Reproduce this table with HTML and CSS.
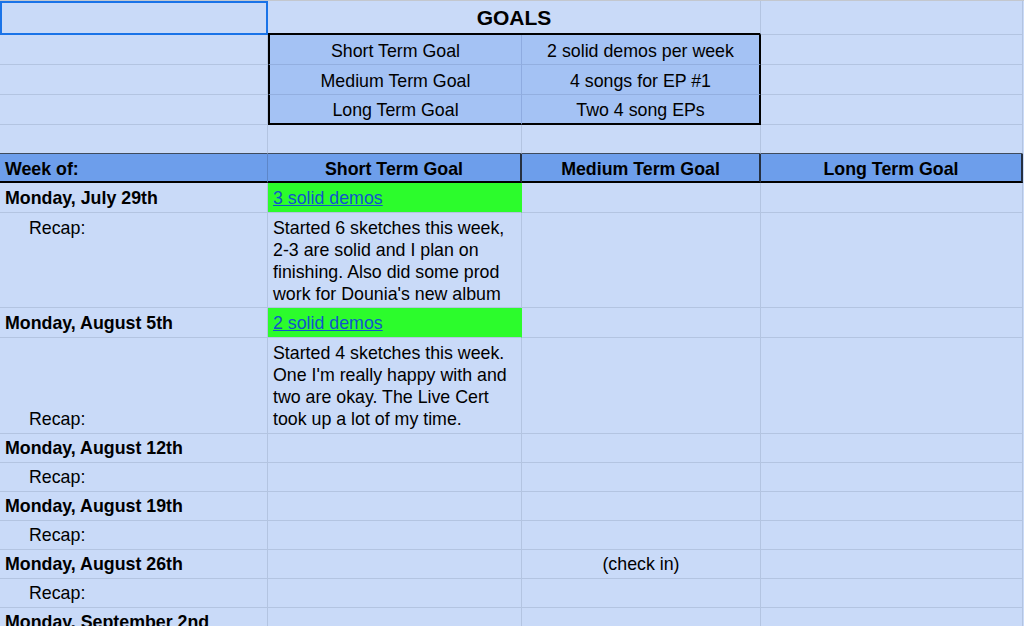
FILE: index.html
```html
<!DOCTYPE html>
<html>
<head>
<meta charset="utf-8">
<link rel="stylesheet" href="styles.css">
</head>
<body>
<div class="sheet">
  <div class="c sel"></div>
  <div class="c title span2">GOALS</div>
  <div class="c"></div>

  <div class="c"></div>
  <div class="c box bl ctr">Short Term Goal</div>
  <div class="c box br ctr">2 solid demos per week</div>
  <div class="c"></div>

  <div class="c"></div>
  <div class="c box bl ctr">Medium Term Goal</div>
  <div class="c box br ctr">4 songs for EP #1</div>
  <div class="c"></div>

  <div class="c"></div>
  <div class="c box bl bb ctr">Long Term Goal</div>
  <div class="c box br bb ctr">Two 4 song EPs</div>
  <div class="c"></div>

  <div class="c pre"></div>
  <div class="c pre"></div>
  <div class="c pre"></div>
  <div class="c pre"></div>

  <div class="c hd">Week of:</div>
  <div class="c hd ctr dr">Short Term Goal</div>
  <div class="c hd ctr dr">Medium Term Goal</div>
  <div class="c hd ctr dr">Long Term Goal</div>

  <div class="c b">Monday, July 29th</div>
  <div class="c green"><a href="#">3 solid demos</a></div>
  <div class="c"></div>
  <div class="c"></div>

  <div class="c recap top">Recap:</div>
  <div class="c top">Started 6 sketches this week,<br>2-3 are solid and I plan on<br>finishing. Also did some prod<br>work for Dounia's new album</div>
  <div class="c"></div>
  <div class="c"></div>

  <div class="c b">Monday, August 5th</div>
  <div class="c green"><a href="#">2 solid demos</a></div>
  <div class="c"></div>
  <div class="c"></div>

  <div class="c recap">Recap:</div>
  <div class="c">Started 4 sketches this week.<br>One I'm really happy with and<br>two are okay. The Live Cert<br>took up a lot of my time.</div>
  <div class="c"></div>
  <div class="c"></div>

  <div class="c b">Monday, August 12th</div>
  <div class="c"></div>
  <div class="c"></div>
  <div class="c"></div>

  <div class="c recap">Recap:</div>
  <div class="c"></div>
  <div class="c"></div>
  <div class="c"></div>

  <div class="c b">Monday, August 19th</div>
  <div class="c"></div>
  <div class="c"></div>
  <div class="c"></div>

  <div class="c recap">Recap:</div>
  <div class="c"></div>
  <div class="c"></div>
  <div class="c"></div>

  <div class="c b">Monday, August 26th</div>
  <div class="c"></div>
  <div class="c ctr">(check in)</div>
  <div class="c"></div>

  <div class="c recap">Recap:</div>
  <div class="c"></div>
  <div class="c"></div>
  <div class="c"></div>

  <div class="c b">Monday, September 2nd</div>
  <div class="c"></div>
  <div class="c"></div>
  <div class="c"></div>

  <div class="c recap">Recap:</div>
  <div class="c"></div>
  <div class="c"></div>
  <div class="c"></div>
</div>
</body>
</html>
```

FILE: styles.css
```css
html, body {
  margin: 0;
  padding: 0;
  background: #c9daf8;
  overflow: hidden;
}

.sheet {
  display: grid;
  grid-template-columns: 268px 254px 239px 262px;
  grid-template-rows: 34px 30px 30px 30px 29px 29px 30px 95px 30px 96px 29px 29px 29px 29px 29px 29px 29px 29px;
  border-top: 1px solid #c3c7ce;
  font-family: "Liberation Sans", Arial, sans-serif;
  font-size: 17.8px;
  line-height: 22px;
  color: #000;
}

.c {
  box-sizing: border-box;
  display: flex;
  align-items: flex-end;
  padding: 0 5px 3px 5px;
  border-right: 1px solid #b3c4e1;
  border-bottom: 1px solid #b3c4e1;
  background: #c9daf8;
  white-space: nowrap;
  overflow: hidden;
}

.c.top {
  align-items: flex-start;
  padding-top: 4px;
}

.ctr {
  justify-content: center;
}

.b {
  font-weight: bold;
}

.recap {
  padding-left: 29px;
}

.sel {
  border: 2px solid #1a73e8;
}

.title {
  grid-column: span 2;
  justify-content: center;
  font-weight: bold;
  font-size: 21px;
  padding-bottom: 4px;
  border-bottom: 2px solid #000;
}

.box {
  background: #a4c2f4;
  border-bottom-color: #93afe0;
  border-right-color: #8eabe0;
  padding-bottom: 2px;
}

.box.bl {
  border-left: 2px solid #000;
}

.box.br {
  border-right: 2px solid #000;
}

.box.bb {
  border-bottom: 2px solid #000;
}

.pre {
  border-bottom: 1px solid #3f4b5c;
}

.hd {
  background: #6d9eeb;
  font-weight: bold;
  border-bottom: 2px solid #000;
  border-right-color: #5d86c8;
  padding-bottom: 1px;
}

.hd.dr {
  border-right: 2px solid #263040;
}

.green {
  background: #2cfc2c;
  border-right-color: #2cfc2c;
}

.green a {
  color: #1155cc;
  text-decoration: underline;
}
```
